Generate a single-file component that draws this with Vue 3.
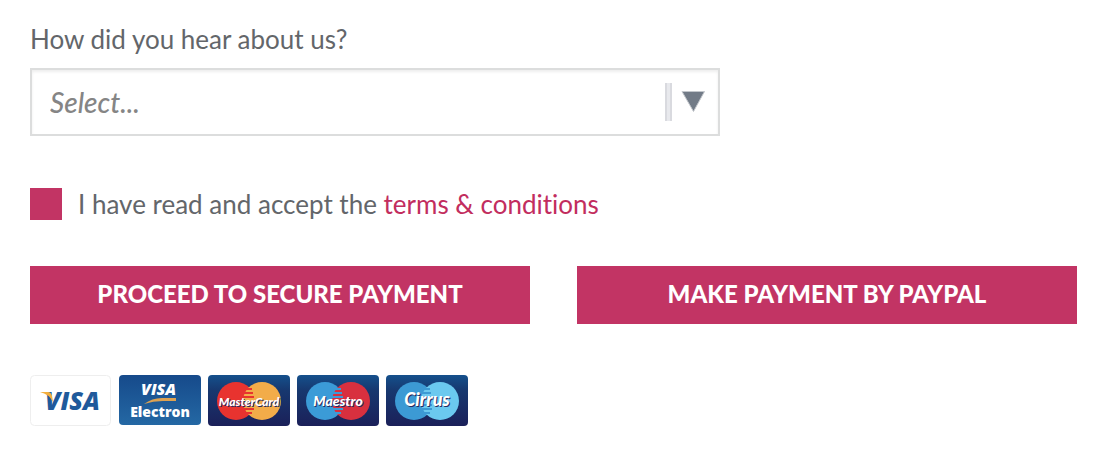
<template>
  <form class="payment" @submit.prevent>
    <label class="question" for="source">How did you hear about us?</label>
    <div class="select-box">
      <select id="source" v-model="source">
        <option value="">Select...</option>
        <option v-for="item in sources" :key="item" :value="item">{{ item }}</option>
      </select>
      <svg class="arrow" viewBox="0 0 40 38" aria-hidden="true">
        <rect x="0" y="0" width="7" height="38" fill="#d9dadf" />
        <rect x="2" y="0" width="3" height="38" fill="#e8e9ed" />
        <path d="M17 8.5h22.500L28.500 28.500z" fill="#727b87" stroke="#c3c7cc" stroke-width="1" />
      </svg>
    </div>

    <div class="terms">
      <input id="terms" v-model="accepted" type="checkbox" />
      <label for="terms">I have read and accept the <a href="#terms">terms &amp; conditions</a></label>
    </div>

    <div class="actions">
      <button type="submit">PROCEED TO SECURE PAYMENT</button>
      <button type="button">MAKE PAYMENT BY PAYPAL</button>
    </div>

    <div class="cards">
      <svg class="card" viewBox="0 0 82 51" role="img" aria-label="Visa">
        <rect x="0.5" y="0.5" width="80" height="50" rx="4" fill="#fff" stroke="#eeeeee" />
        <text class="visa" x="15" y="35" font-size="25" fill="#1f5a9b">VISA</text>
        <path d="M10 17h8q3 0 4 4l1 6q-4-8-13-10z" fill="#f3ae3d" />
      </svg>

      <svg class="card" viewBox="0 0 82 51" role="img" aria-label="Visa Electron">
        <defs>
          <linearGradient id="electron" x1="0" y1="0" x2="0" y2="1">
            <stop offset="0" stop-color="#164a8b" />
            <stop offset="1" stop-color="#2468a4" />
          </linearGradient>
          <linearGradient id="navy" x1="0" y1="0" x2="0" y2="1">
            <stop offset="0" stop-color="#15508c" />
            <stop offset="0.3" stop-color="#17386f" />
            <stop offset="1" stop-color="#1b2059" />
          </linearGradient>
        </defs>
        <rect width="82" height="50" rx="4" fill="url(#electron)" />
        <text class="visa" x="22" y="20" font-size="16" fill="#fff">VISA</text>
        <path d="M25 29q8-6 18-6h14v3H44q-10 0-19 3z" fill="#dda252" />
        <text class="electron" x="41" y="42" font-size="14" text-anchor="middle" fill="#fff">Electron</text>
      </svg>

      <svg v-for="card in circleCards" :key="card.name" class="card" viewBox="0 0 82 51" role="img" :aria-label="card.name">
        <rect width="82" height="51" rx="4" fill="url(#navy)" />
        <circle cx="28" cy="26" r="19" :fill="card.left" />
        <circle cx="54" cy="26" r="19" :fill="card.right" />
        <path
          d="M38 14h6M36 18h9M35 22h11M35 30h11M36 34h10M38 38h6"
          :stroke="card.left"
          stroke-width="2"
        />
        <text class="brand" x="42" y="32" :font-size="card.size" text-anchor="middle" fill="#252b60">{{ card.name }}</text>
        <text class="brand" x="41" y="31" :font-size="card.size" text-anchor="middle" fill="#fff">{{ card.name }}</text>
      </svg>
    </div>
  </form>
</template>

<script setup>
import { ref } from 'vue'

const source = ref('')
const accepted = ref(false)

const sources = ['Search engine', 'Friend or family', 'Social media', 'Other']

const circleCards = [
  { name: 'MasterCard', left: '#e8332f', right: '#f2ac49', size: 12 },
  { name: 'Maestro', left: '#3b9bd7', right: '#d8303f', size: 14 },
  { name: 'Cirrus', left: '#3c9ad4', right: '#6bc9ef', size: 18 }
]
</script>

<style>
body {
  margin: 0;
  background: #fff;
}
</style>

<style scoped>
.payment {
  padding: 23px 27px 38px 30px;
  font-family: Lato, "Open Sans", sans-serif;
  font-size: 26px;
  font-variant-ligatures: none;
  line-height: 32px;
  color: #63666a;
}

.question {
  display: block;
  margin-bottom: 13px;
}

.select-box {
  display: grid;
  align-items: center;
  max-width: 690px;
}

select {
  grid-area: 1 / 1;
  width: 100%;
  height: 68px;
  padding: 0 60px 0 18px;
  border: 2px solid #dcdddd;
  border-radius: 0;
  background: #fff;
  box-shadow: inset 0 2px 3px #eeeeee;
  appearance: none;
  font: italic 500 28px Lato, "Open Sans", sans-serif;
  color: #858585;
}

.arrow {
  grid-area: 1 / 1;
  justify-self: end;
  width: 40px;
  height: 38px;
  margin-right: 15px;
  pointer-events: none;
}

.terms {
  display: flex;
  align-items: center;
  gap: 16px;
  margin-top: 52px;
}

.terms input {
  flex: none;
  width: 32px;
  height: 32px;
  margin: 0;
  background: #c23464;
  appearance: none;
}

a {
  color: #c22d5e;
  text-decoration: none;
}

.actions {
  display: grid;
  grid-template-columns: 1fr 1fr;
  gap: 47px;
  margin-top: 46px;
}

button {
  height: 58px;
  padding: 0 16px 3px;
  border: none;
  background: #c23464;
  color: #fff;
  font: 900 24px Lato, "Open Sans", sans-serif;
  cursor: pointer;
}

.cards {
  display: flex;
  flex-wrap: wrap;
  gap: 7px;
  margin-top: 51px;
}

.card {
  width: 82px;
  height: 51px;
}

.visa {
  font-family: "Open Sans", sans-serif;
  font-style: italic;
  font-weight: 800;
}

.electron {
  font-family: "Open Sans", sans-serif;
  font-weight: 800;
}

.brand {
  font-family: Lato, "Open Sans", sans-serif;
  font-style: italic;
  font-weight: 900;
}
</style>
